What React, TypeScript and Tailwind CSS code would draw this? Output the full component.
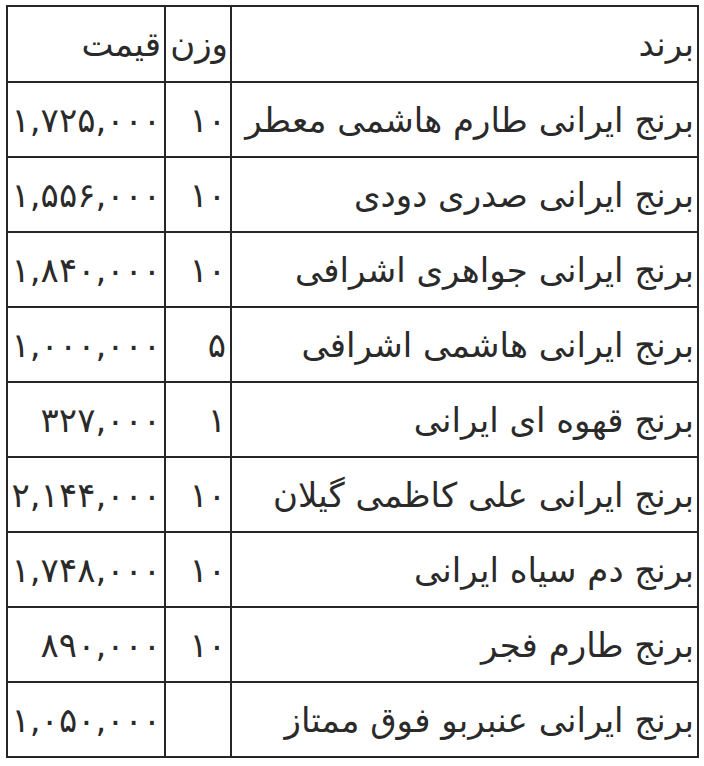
import React from "react";

const rows: [string, string, string][] = [
  ["برنج ایرانی طارم هاشمی معطر", "۱۰", "۱,۷۲۵,۰۰۰"],
  ["برنج ایرانی صدری دودی", "۱۰", "۱,۵۵۶,۰۰۰"],
  ["برنج ایرانی جواهری اشرافی", "۱۰", "۱,۸۴۰,۰۰۰"],
  ["برنج ایرانی هاشمی اشرافی", "۵", "۱,۰۰۰,۰۰۰"],
  ["برنج قهوه ای ایرانی", "۱", "۳۲۷,۰۰۰"],
  ["برنج ایرانی علی کاظمی گیلان", "۱۰", "۲,۱۴۴,۰۰۰"],
  ["برنج دم سیاه ایرانی", "۱۰", "۱,۷۴۸,۰۰۰"],
  ["برنج طارم فجر", "۱۰", "۸۹۰,۰۰۰"],
  ["برنج ایرانی عنبربو فوق ممتاز", "", "۱,۰۵۰,۰۰۰"],
];

export default function App() {
  return (
    <div className="w-[704px] h-[766px] bg-white pt-[5px] pl-[6px]">
      <table
        dir="rtl"
        className="table-fixed border-collapse w-[691px] text-[#2a2a2a] text-[34px] leading-none"
        style={{ fontFamily: '"DejaVu Sans", Tahoma, sans-serif' }}
      >
        <colgroup>
          <col className="w-[467px]" />
          <col className="w-[66px]" />
          <col className="w-[158px]" />
        </colgroup>
        <tbody>
          <tr className="h-[76px]">
            <td className="border-2 border-[#262626] px-[3px] text-right">برند</td>
            <td className="border-2 border-[#262626] px-[2px] text-right">وزن</td>
            <td className="border-2 border-[#262626] px-[3px] text-right">قیمت</td>
          </tr>
          {rows.map((r, i) => (
            <tr key={i} className="h-[75px]">
              <td className="border-2 border-[#262626] px-[3px] text-right whitespace-nowrap">{r[0]}</td>
              <td className="border-2 border-[#262626] px-[4px] text-right">{r[1]}</td>
              <td className="border-2 border-[#262626] px-[3px] text-right whitespace-nowrap tracking-[-1px]">{r[2]}</td>
            </tr>
          ))}
        </tbody>
      </table>
    </div>
  );
}
